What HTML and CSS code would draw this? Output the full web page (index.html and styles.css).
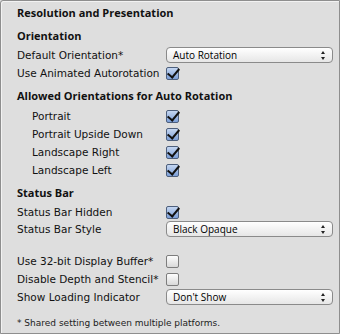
FILE: index.html
```html
<!DOCTYPE html>
<html lang="en">
<head>
  <meta charset="UTF-8">
  <title>Resolution and Presentation</title>
  <link rel="stylesheet" href="styles.css">
</head>
<body>
  <div class="panel">
    <div class="title">Resolution and Presentation</div>

    <div class="section">Orientation</div>
    <div class="row">
      <span class="label">Default Orientation*</span>
      <div class="popup"><span>Auto Rotation</span><span class="arrows"></span></div>
    </div>
    <div class="row">
      <span class="label">Use Animated Autorotation</span>
      <span class="check on"></span>
    </div>

    <div class="section spaced">Allowed Orientations for Auto Rotation</div>
    <div class="row indent">
      <span class="label">Portrait</span>
      <span class="check on"></span>
    </div>
    <div class="row indent">
      <span class="label">Portrait Upside Down</span>
      <span class="check on"></span>
    </div>
    <div class="row indent">
      <span class="label">Landscape Right</span>
      <span class="check on"></span>
    </div>
    <div class="row indent">
      <span class="label">Landscape Left</span>
      <span class="check on"></span>
    </div>

    <div class="section">Status Bar</div>
    <div class="row">
      <span class="label">Status Bar Hidden</span>
      <span class="check on"></span>
    </div>
    <div class="row tight">
      <span class="label">Status Bar Style</span>
      <div class="popup"><span>Black Opaque</span><span class="arrows"></span></div>
    </div>

    <div class="group">
      <div class="row">
        <span class="label">Use 32-bit Display Buffer*</span>
        <span class="check"></span>
      </div>
      <div class="row">
        <span class="label">Disable Depth and Stencil*</span>
        <span class="check"></span>
      </div>
      <div class="row">
        <span class="label">Show Loading Indicator</span>
        <div class="popup"><span>Don't Show</span><span class="arrows"></span></div>
      </div>
    </div>

    <div class="note">* Shared setting between multiple platforms.</div>
  </div>
</body>
</html>
```

FILE: styles.css
```css
* {
  margin: 0;
  padding: 0;
  box-sizing: border-box;
}

body {
  font-family: 'DejaVu Sans', sans-serif;
  font-size: 10.5px;
  color: #111;
  background: #dedede;
}

.panel {
  width: 340px;
  height: 334px;
  background: #dedede;
  border: 1px solid #8e8e8e;
  border-top-left-radius: 3px;
  box-shadow: inset 1px 1px 0 #f2f2f2;
  padding: 3px 6px 0 16px;
}

.title,
.section {
  font-family: 'Open Sans', sans-serif;
  font-size: 11px;
  font-weight: bold;
  height: 18px;
  line-height: 18px;
}

.section {
  margin: 5px 0 1px;
}

.section.spaced {
  margin-bottom: 2px;
}

.row {
  display: flex;
  align-items: center;
  height: 18px;
}

.row.tight {
  margin-top: -1px;
}

.label {
  width: 148px;
  flex-shrink: 0;
  white-space: nowrap;
}

.indent .label {
  padding-left: 15px;
}

.check {
  width: 13px;
  height: 13px;
  border: 1px solid #7d7d7d;
  border-radius: 2px;
  background: linear-gradient(#fdfdfd, #d9d9d9);
  margin-left: 1px;
  position: relative;
}

.check.on {
  border-color: #4d5f7c;
  background: linear-gradient(#c4d6f1, #7c9fd8);
}

.check.on::after {
  content: "";
  position: absolute;
  left: 3px;
  top: -2px;
  width: 5px;
  height: 10px;
  border: solid #111;
  border-width: 0 2px 2px 0;
  transform: rotate(40deg);
}

.popup {
  width: 170px;
  height: 16px;
  margin-left: 1px;
  border: 1px solid #8a8a8a;
  border-radius: 4px;
  background: linear-gradient(#ffffff, #e6e6e6);
  font-family: 'Open Sans', sans-serif;
  font-size: 10px;
  color: #000;
  display: flex;
  align-items: center;
  justify-content: space-between;
  padding: 0 6px 0 6px;
}

.arrows {
  width: 5px;
  height: 9px;
  position: relative;
}

.arrows::before,
.arrows::after {
  content: "";
  position: absolute;
  left: 0;
  border-left: 2.5px solid transparent;
  border-right: 2.5px solid transparent;
}

.arrows::before {
  top: 0;
  border-bottom: 3px solid #222;
}

.arrows::after {
  bottom: 0;
  border-top: 3px solid #222;
}

.group {
  margin-top: 14px;
}

.note {
  font-size: 9px;
  line-height: 12px;
  margin-top: 11px;
  color: #222;
}
```
